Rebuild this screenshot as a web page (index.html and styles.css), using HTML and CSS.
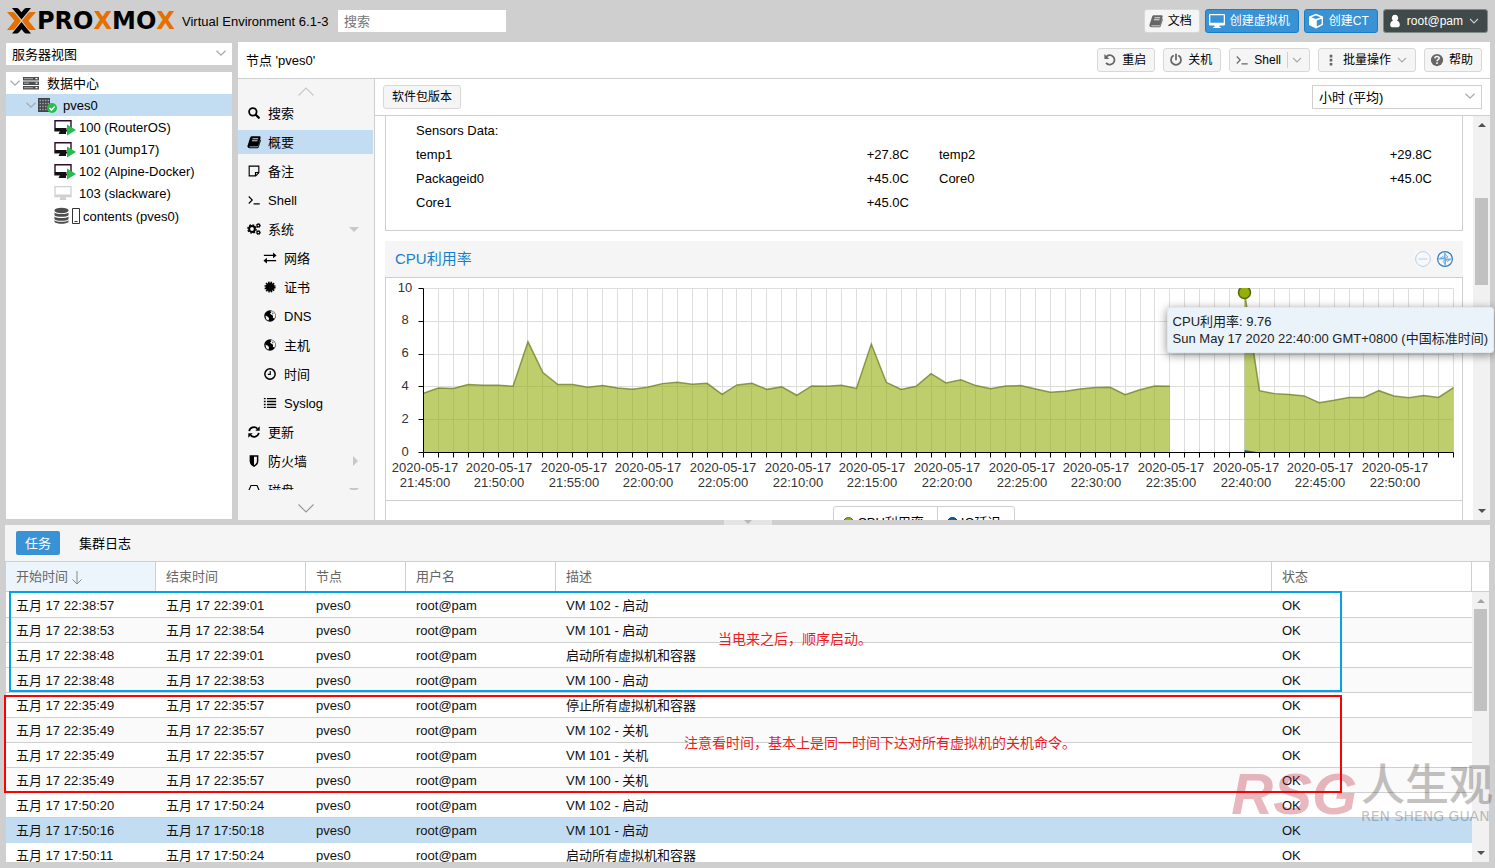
FILE: index.html
```html
<!DOCTYPE html>
<html lang="zh-CN">
<head>
<meta charset="utf-8">
<title>pves0 - Proxmox Virtual Environment</title>
<link rel="stylesheet" href="styles.css">
</head>
<body>
<svg class="sprite" aria-hidden="true">
  <symbol id="i-book" viewBox="0 0 16 16"><path fill="currentColor" d="M5.6 1.5h8.6c1 0 1.6.8 1.3 1.8l-2.4 8.3c-.3.9-1 1.4-1.9 1.4H3.2c-.6 0-.7.9 0 .9h8.5c.6 0 .9-.3 1.1-.8l2.5-8c.6.4.7 1 .5 1.600l-2.300 7.100c-.300.900-1 1.400-1.900 1.400H3C1.300 15.200.100 13.800.600 12.300L3.500 3.200C3.800 2.200 4.600 1.500 5.600 1.500z"/><path stroke="#f5f5f5" stroke-width="1" d="M6.300 4.300h6.500M5.600 6.600h6.500"/></symbol>
  <symbol id="i-desktop" viewBox="0 0 16 16"><path fill="currentColor" fill-rule="evenodd" d="M1 1h14a1 1 0 0 1 1 1v9.500a1 1 0 0 1-1 1h-4.500v1.500h1.300v1H4.200v-1h1.300v-1.500H1a1 1 0 0 1-1-1V2a1 1 0 0 1 1-1zm.300 1.300v7.500h13.400V2.300z"/></symbol>
  <symbol id="i-cube" viewBox="0 0 16 16"><path fill="currentColor" fill-rule="evenodd" d="M8 .800l7 2.700v8.500l-7 3.500-7-3.500V3.500zM8 2.400L3.300 4.300 8 6.100l4.700-1.800zM8.800 7.500v5.900l4.800-2.400V5.700z"/></symbol>
  <symbol id="i-user" viewBox="0 0 16 16"><path fill="currentColor" d="M8 1a3.600 3.700 0 0 1 2.300 6.600C12.500 8 13.500 10 13.500 12.700c0 1.500-.8 2.300-2 2.300h-7c-1.200 0-2-.8-2-2.300C2.500 10 3.500 8 5.700 7.600A3.600 3.700 0 0 1 8 1z"/></symbol>
  <symbol id="i-undo" viewBox="0 0 16 16"><path fill="none" stroke="currentColor" stroke-width="2" d="M3.600 4.500a5.400 5.400 0 1 1-.1 6.800"/><path fill="currentColor" d="M1.600 1.200v5.600h5.600z"/></symbol>
  <symbol id="i-power" viewBox="0 0 16 16"><path fill="none" stroke="currentColor" stroke-width="2" stroke-linecap="round" d="M4.700 3.200a5.700 5.700 0 1 0 6.600 0M8 1.500v6"/></symbol>
  <symbol id="i-term" viewBox="0 0 16 16"><path fill="none" stroke="currentColor" stroke-width="1.300" d="M2 4l4 4-4 4M7.500 12.500h7"/></symbol>
  <symbol id="i-dots" viewBox="0 0 16 16"><path fill="currentColor" d="M6.500 2h3v3h-3zM6.500 6.700h3v3h-3zM6.500 11.400h3v3h-3z"/></symbol>
  <symbol id="i-help" viewBox="0 0 16 16"><circle cx="8" cy="8" r="7" fill="currentColor"/><path fill="none" stroke="#f5f5f5" stroke-width="1.800" d="M5.500 6.200C5.600 4.700 6.600 4 8 4s2.500.8 2.500 2c0 1.500-2.500 1.700-2.500 3.300M8 10.500v2"/></symbol>
  <symbol id="i-down" viewBox="0 0 16 16"><path fill="none" stroke="currentColor" stroke-width="1.300" d="M3.500 5.700L8 10.200l4.500-4.500"/></symbol>
  <symbol id="i-search" viewBox="0 0 16 16"><circle cx="6.700" cy="6.700" r="4.300" fill="none" stroke="currentColor" stroke-width="2"/><path stroke="currentColor" stroke-width="2.600" stroke-linecap="round" d="M10.300 10.300l3.200 3.200"/></symbol>
  <symbol id="i-note" viewBox="0 0 16 16"><path fill="none" stroke="currentColor" stroke-width="1.300" d="M2.500 2.500h11v7.500l-3.500 3.500H2.500zM13.500 9.700H9.700v3.800"/></symbol>
  <symbol id="i-cogs" viewBox="0 0 16 16"><circle cx="5.700" cy="8" r="3.300" fill="none" stroke="currentColor" stroke-width="2.300"/><circle cx="5.700" cy="8" r="4.800" fill="none" stroke="currentColor" stroke-width="1.500" stroke-dasharray="2 1.770"/><circle cx="13" cy="4" r="1.600" fill="none" stroke="currentColor" stroke-width="1.400"/><circle cx="13" cy="12" r="1.600" fill="none" stroke="currentColor" stroke-width="1.400"/><circle cx="13" cy="4" r="2.500" fill="none" stroke="currentColor" stroke-width=".9" stroke-dasharray="1 .96"/><circle cx="13" cy="12" r="2.500" fill="none" stroke="currentColor" stroke-width=".9" stroke-dasharray="1 .96"/></symbol>
  <symbol id="i-exchange" viewBox="0 0 16 16"><path fill="currentColor" d="M1 4.200h10.500V1.800L15.500 5l-4 3.200V5.800H1zM15 10.200H4.500V7.800L.5 11l4 3.200v-2.400H15z"/></symbol>
  <symbol id="i-cert" viewBox="0 0 16 16"><circle cx="8" cy="8" r="5" fill="currentColor"/><circle cx="8" cy="8" r="5.400" fill="none" stroke="currentColor" stroke-width="2" stroke-dasharray="1.700 1.127"/></symbol>
  <symbol id="i-globe" viewBox="0 0 16 16"><circle cx="8" cy="8" r="6.600" fill="currentColor"/><path fill="#f5f5f5" d="M8.500 2.500l2.500 0 2.500 2.500.7 3-1.200 3.200-1.700-1.200.2-2.300-2.200-1.300-1.500-1.200 1.700-1zM2.800 7.500l3.200 1.500 1 2-1 2.500-2.500-2z"/><path fill="currentColor" d="M10.500 4l1.500 1-1 1.200z"/></symbol>
  <symbol id="i-clock" viewBox="0 0 16 16"><circle cx="8" cy="8" r="5.900" fill="none" stroke="currentColor" stroke-width="1.700"/><path fill="none" stroke="currentColor" stroke-width="1.300" d="M8.300 4.500v4H5.500"/></symbol>
  <symbol id="i-list" viewBox="0 0 16 16"><path stroke="currentColor" stroke-width="1.700" d="M1 3h2M1 6.300h2M1 9.700h2M1 13h2M4.500 3H15M4.500 6.300H15M4.500 9.700H15M4.500 13H15"/></symbol>
  <symbol id="i-refresh" viewBox="0 0 16 16"><path fill="none" stroke="currentColor" stroke-width="2" d="M2.500 7A5.500 5.500 0 0 1 12 4.400M13.500 9A5.500 5.500 0 0 1 4 11.600"/><path fill="currentColor" d="M14.500 1.500v5h-5zM1.500 14.500v-5h5z"/></symbol>
  <symbol id="i-shield" viewBox="0 0 16 16"><path fill="currentColor" fill-rule="evenodd" d="M3 1.500h10v6.800c0 3.400-3 5.500-5 6.500-2-1-5-3.100-5-6.500zM8 3.200v9.600c1.700-1 3.300-2.500 3.300-4.500V3.200z"/></symbol>
  <symbol id="i-hdd" viewBox="0 0 16 16"><path fill="none" stroke="currentColor" stroke-width="1.300" d="M4.500 2.800h7l2.500 6v5H2v-5zM2 9h12"/></symbol>
  <symbol id="i-server" viewBox="0 0 16 16"><path fill="#4d4d4d" d="M0 2h16v3.500H0zM0 6.500h16V10H0zM0 11h16v3.500H0z"/><path stroke="#aaa" d="M1 3.700h9M1 8.200h5M1 12.700h9"/><path stroke="#fff" stroke-width="1.300" d="M12.500 3.700h2M12.500 8.200h2M12.500 12.700h2"/></symbol>
  <symbol id="i-node" viewBox="0 0 20 16"><path fill="#444" d="M0 1h12v14H0z"/><path stroke="#9aa9b5" stroke-width="1.500" stroke-dasharray="1.500 1.200" d="M1.500 3.500h10M1.500 6.500h10M1.500 9.500h10M1.500 12.500h10"/><circle cx="14" cy="11" r="5" fill="#21bf4b"/><path fill="none" stroke="#fff" stroke-width="1.600" d="M11.500 11l2 2 3.200-3.500"/></symbol>
  <symbol id="i-vm" viewBox="0 0 22 18"><path fill="none" stroke="#2b0f24" stroke-width="1.400" d="M1 2.700h16v10H1z"/><path fill="#111" d="M1 10h11.500v3H1zM6 13h6v3H4.500z"/><path fill="#21bf4b" d="M13 6.500l9 5.500-9 5.500z"/></symbol>
  <symbol id="i-vmoff" viewBox="0 0 22 18"><path fill="none" stroke="#d0d0d0" stroke-width="1.300" d="M1 2.700h16v10H1z"/><path fill="#d0d0d0" d="M1 10.500h16v2.500H1zM6.500 13h5l1 3H5.500z"/></symbol>
  <symbol id="i-db" viewBox="0 0 26 18"><g fill="#4d4d4d"><ellipse cx="7.500" cy="3.500" rx="7" ry="2.700"/><path d="M.5 5.500c2 2 12 2 14 0v2.700c-2 2.200-12 2.200-14 0zM.5 9.500c2 2 12 2 14 0v2.700c-2 2.200-12 2.200-14 0zM.5 13.300c2 2 12 2 14 0v1.700c-2 2.400-12 2.400-14 0z"/></g><path fill="#fff" stroke="#333" d="M18.500 1.500h7v15h-7zM20.500 14.500h3"/></symbol>
</svg>

<header class="top">
  <a class="logo" href="#" aria-label="Proxmox">
    <svg width="29" height="26" viewBox="0 0 29 26" aria-hidden="true">
      <path fill="#e57000" d="M0 4h5.500c1 0 1.700.4 2.300 1L14 12.800 7.800 21c-.6.700-1.300 1-2.300 1H0l7.500-9.200zM29 4h-5.500c-1 0-1.700.4-2.300 1L15 12.800l6.200 8.200c.6.700 1.300 1 2.300 1H29l-7.500-9.200z"/>
      <path fill="#000" d="M5 0h4.500c1 0 1.800.400 2.500 1.200l2.500 3 2.500-3C17.700.400 18.500 0 19.500 0H24l-9.500 11.500zM5 25.500h4.500c1 0 1.800-.4 2.500-1.200l2.500-3 2.500 3c.7.800 1.500 1.200 2.500 1.200H24l-9.500-11.500z"/>
    </svg>
    <span class="wordmark">PRO<b>X</b>MO<b>X</b></span>
  </a>
  <span class="version">Virtual Environment 6.1-3</span>
  <input class="find" type="text" placeholder="搜索" aria-label="搜索">
  <div class="actions">
    <button class="btn"><svg class="ic"><use href="#i-book"/></svg>文档</button>
    <button class="btn blue"><svg class="ic"><use href="#i-desktop"/></svg>创建虚拟机</button>
    <button class="btn blue"><svg class="ic"><use href="#i-cube"/></svg>创建CT</button>
    <button class="btn dark"><svg class="ic"><use href="#i-user"/></svg>root@pam<svg class="ic caret"><use href="#i-down"/></svg></button>
  </div>
</header>

<main class="work">
  <aside class="left">
    <div class="combo view">
      <select aria-label="视图"><option>服务器视图</option></select>
      <svg class="ic"><use href="#i-down"/></svg>
    </div>
    <ul class="tree">
      <li class="l0"><svg class="ic tw"><use href="#i-down"/></svg><svg class="ic"><use href="#i-server"/></svg><span>数据中心</span></li>
      <li class="l1 on"><svg class="ic tw"><use href="#i-down"/></svg><svg class="nodeic"><use href="#i-node"/></svg><span>pves0</span></li>
      <li class="l2"><svg class="vmic"><use href="#i-vm"/></svg><span>100 (RouterOS)</span></li>
      <li class="l2"><svg class="vmic"><use href="#i-vm"/></svg><span>101 (Jump17)</span></li>
      <li class="l2"><svg class="vmic"><use href="#i-vm"/></svg><span>102 (Alpine-Docker)</span></li>
      <li class="l2"><svg class="vmic"><use href="#i-vmoff"/></svg><span>103 (slackware)</span></li>
      <li class="l2 store"><svg class="dbic"><use href="#i-db"/></svg><span>contents (pves0)</span></li>
    </ul>
  </aside>

  <section class="content">
    <div class="titlebar">
      <h1>节点 'pves0'</h1>
      <div class="tools">
        <button class="btn"><svg class="ic"><use href="#i-undo"/></svg>重启</button>
        <button class="btn"><svg class="ic"><use href="#i-power"/></svg>关机</button>
        <div class="split"><button class="btn"><svg class="ic"><use href="#i-term"/></svg>Shell</button><button class="btn more" aria-label="更多"><svg class="ic caret"><use href="#i-down"/></svg></button></div>
        <button class="btn drop"><svg class="ic"><use href="#i-dots"/></svg>批量操作<svg class="ic caret"><use href="#i-down"/></svg></button>
        <button class="btn"><svg class="ic"><use href="#i-help"/></svg>帮助</button>
      </div>
    </div>
    <div class="split-body">
      <nav class="menu">
        <button class="scroller" aria-label="向上"><svg width="16" height="9" viewBox="0 0 16 9"><path fill="none" stroke="#c8c8c8" stroke-width="1.200" d="M.5 8.500L8 1l7.500 7.500"/></svg></button>
        <ul>
          <li><svg class="ic"><use href="#i-search"/></svg>搜索</li>
          <li class="on"><svg class="ic"><use href="#i-book"/></svg>概要</li>
          <li><svg class="ic"><use href="#i-note"/></svg>备注</li>
          <li><svg class="ic"><use href="#i-term"/></svg>Shell</li>
          <li><svg class="ic"><use href="#i-cogs"/></svg>系统<i class="tri down"></i></li>
          <li class="sub"><svg class="ic"><use href="#i-exchange"/></svg>网络</li>
          <li class="sub"><svg class="ic"><use href="#i-cert"/></svg>证书</li>
          <li class="sub"><svg class="ic"><use href="#i-globe"/></svg>DNS</li>
          <li class="sub"><svg class="ic"><use href="#i-globe"/></svg>主机</li>
          <li class="sub"><svg class="ic"><use href="#i-clock"/></svg>时间</li>
          <li class="sub"><svg class="ic"><use href="#i-list"/></svg>Syslog</li>
          <li><svg class="ic"><use href="#i-refresh"/></svg>更新</li>
          <li><svg class="ic"><use href="#i-shield"/></svg>防火墙<i class="tri right"></i></li>
          <li><svg class="ic"><use href="#i-hdd"/></svg>磁盘<i class="tri down"></i></li>
        </ul>
        <button class="scroller end" aria-label="向下"><svg width="16" height="9" viewBox="0 0 16 9"><path fill="none" stroke="#999" stroke-width="1.200" d="M.5.500L8 8l7.500-7.500"/></svg></button>
      </nav>
      <div class="pane">
        <div class="pane-bar">
          <button class="btn plain">软件包版本</button>
          <div class="combo range">
            <select aria-label="时间范围"><option>小时 (平均)</option></select>
            <svg class="ic"><use href="#i-down"/></svg>
          </div>
        </div>
        <div class="pane-scroll">
          <div class="cards">
            <div class="sensors">
              <p class="wide">Sensors Data:</p>
              <p>temp1<span>+27.8C</span></p><p>temp2<span>+29.8C</span></p>
              <p>Packageid0<span>+45.0C</span></p><p>Core0<span>+45.0C</span></p>
              <p>Core1<span>+45.0C</span></p>
            </div>
            <div class="chart-card">
              <div class="card-head">
                <h2>CPU利用率</h2>
                <button aria-label="缩小" class="faint"><svg width="16" height="16" viewBox="0 0 16 16"><circle cx="8" cy="8" r="7.400" fill="none" stroke="#3892d4"/><path stroke="#3892d4" d="M3.500 8h9"/></svg></button>
                <button aria-label="重置缩放"><svg width="16" height="16" viewBox="0 0 16 16"><circle cx="8" cy="8" r="7.400" fill="none" stroke="#2f7fc1" stroke-width="1.200"/><path fill="#dcebf7" stroke="#5fa5dc" stroke-width=".8" d="M7.500 2.500l3.500 3.500-3.500 1.500zM13.500 8.500l-3.500 2-1.500-2zM8.500 13.500L6 10.500l2.500-2zM2.500 7.500L6 5.500l1.500 2z"/><path stroke="#5fa5dc" stroke-width=".8" d="M8 1v14M1 8h14"/></svg></button>
              </div>
              <svg id="cpu-chart" class="plot" role="img" aria-label="CPU利用率"></svg>
              <div class="legend">
                <div class="legend-box"><span><i class="dot green"></i>CPU利用率</span><span><i class="dot navy"></i>IO延迟</span></div>
              </div>
            </div>
          </div>
          <div class="bar main-bar"><i class="up"></i><i class="thumb"></i><i class="dn"></i></div>
        </div>
      </div>
    </div>
    <div class="tip" role="tooltip">CPU利用率: 9.76<br>Sun May 17 2020 22:40:00 GMT+0800 (中国标准时间)</div>
  </section>
</main>

<div class="divider"><i></i></div>

<section class="log">
  <div class="tabs"><button class="tab on">任务</button><button class="tab">集群日志</button></div>
  <div class="grid">
    <div class="rows">
      <table>
        <colgroup><col class="c150"><col class="c150"><col class="c100"><col class="c150"><col><col class="c200"></colgroup>
        <thead><tr><th class="sorted">开始时间<svg width="10" height="14" viewBox="0 0 10 14"><path fill="none" stroke="#888" d="M5 0v13M.5 8.500L5 13l4.500-4.500"/></svg></th><th>结束时间</th><th>节点</th><th>用户名</th><th>描述</th><th>状态</th></tr></thead>
        <tbody>
          <tr><td>五月 17 22:38:57</td><td>五月 17 22:39:01</td><td>pves0</td><td>root@pam</td><td>VM 102 - 启动</td><td>OK</td></tr>
          <tr><td>五月 17 22:38:53</td><td>五月 17 22:38:54</td><td>pves0</td><td>root@pam</td><td>VM 101 - 启动</td><td>OK</td></tr>
          <tr><td>五月 17 22:38:48</td><td>五月 17 22:39:01</td><td>pves0</td><td>root@pam</td><td>启动所有虚拟机和容器</td><td>OK</td></tr>
          <tr><td>五月 17 22:38:48</td><td>五月 17 22:38:53</td><td>pves0</td><td>root@pam</td><td>VM 100 - 启动</td><td>OK</td></tr>
          <tr><td>五月 17 22:35:49</td><td>五月 17 22:35:57</td><td>pves0</td><td>root@pam</td><td>停止所有虚拟机和容器</td><td>OK</td></tr>
          <tr><td>五月 17 22:35:49</td><td>五月 17 22:35:57</td><td>pves0</td><td>root@pam</td><td>VM 102 - 关机</td><td>OK</td></tr>
          <tr><td>五月 17 22:35:49</td><td>五月 17 22:35:57</td><td>pves0</td><td>root@pam</td><td>VM 101 - 关机</td><td>OK</td></tr>
          <tr><td>五月 17 22:35:49</td><td>五月 17 22:35:57</td><td>pves0</td><td>root@pam</td><td>VM 100 - 关机</td><td>OK</td></tr>
          <tr><td>五月 17 17:50:20</td><td>五月 17 17:50:24</td><td>pves0</td><td>root@pam</td><td>VM 102 - 启动</td><td>OK</td></tr>
          <tr class="on"><td>五月 17 17:50:16</td><td>五月 17 17:50:18</td><td>pves0</td><td>root@pam</td><td>VM 101 - 启动</td><td>OK</td></tr>
          <tr><td>五月 17 17:50:11</td><td>五月 17 17:50:24</td><td>pves0</td><td>root@pam</td><td>启动所有虚拟机和容器</td><td>OK</td></tr>
        </tbody>
      </table>
    </div>
    <div class="side"><div class="corner"></div><div class="bar log-bar"><i class="up"></i><i class="thumb"></i><i class="dn"></i></div></div>
  </div>
  <div class="frame blue-frame"></div>
  <div class="frame red-frame"></div>
  <p class="note note-a">当电来之后，顺序启动。</p>
  <p class="note note-b">注意看时间，基本上是同一时间下达对所有虚拟机的关机命令。</p>
  <div class="mark"><span class="rsg">RSG</span><div class="mark-side"><span class="cn">人生观</span><span class="en">REN SHENG GUAN</span></div></div>
</section>
<script src="app.js"></script>
</body>
</html>
```
FILE: styles.css
```css
* { box-sizing: border-box; }
body {
  margin: 0; height: 100vh; display: flex; flex-direction: column; overflow: hidden;
  background: #cfcfcf; color: #000; padding-bottom: 6px;
  font: 13px/17px "Liberation Sans", "Noto Sans CJK SC", sans-serif;
}
button, input, select { font: inherit; color: inherit; }
button { border: 0; padding: 0; background: none; }
ul, p, h1, h2 { margin: 0; padding: 0; list-style: none; font-weight: normal; }
.sprite { position: absolute; width: 0; height: 0; }
.ic { width: 16px; height: 16px; flex: none; }

.top { height: 42px; flex: none; display: flex; align-items: center; padding: 0 7px; }
.logo { display: flex; align-items: center; gap: 1px; color: #000; text-decoration: none; width: 175px; }
.wordmark { font: bold 24px/26px "DejaVu Sans", sans-serif; }
.wordmark b { color: #e57000; }
.version { width: 156px; white-space: nowrap; }
.find { width: 168px; height: 22px; border: 0; padding: 0 6px; background: #fff; }
.find::placeholder { color: #757575; opacity: 1; }
.actions { margin-left: auto; display: flex; gap: 5px; }

.btn {
  height: 24px; display: flex; align-items: center; gap: 4px; padding: 0 8px 0 4px;
  background: #f5f5f5; border: 1px solid #d8d8d8; border-radius: 3px;
  font-size: 12px; line-height: 16px; white-space: nowrap;
}
.btn .ic { color: #666; width: 14px; height: 14px; margin: 0 1px; }
.btn .caret { color: #aaa; margin: 0; }
.btn.drop { padding-right: 6px; }
.actions .btn { padding: 0 7px 0 3px; }
.actions .btn.blue { gap: 5px; padding: 0 8px 0 3px; background: #3892d4; border-color: #157fcc; color: #fff; }
.btn.blue .ic { color: #fff; width: 16px; height: 16px; margin: 0; }
.actions .btn.dark { padding-right: 6px; background: #404a4a; border-color: #7c8a8a; color: #fff; }
.btn.dark .ic { color: #fff; }
.btn.dark .caret { color: #ccc; }

.work { flex: 1; min-height: 0; display: flex; padding-left: 6px; padding-right: 5px; }
.left { width: 226px; flex: none; margin: 1px 6px 1px 0; display: flex; flex-direction: column; gap: 7px; }
.combo { position: relative; background: #fff; }
.combo select { width: 100%; height: 100%; appearance: none; border: 0; background: none; padding: 0 6px; }
.combo .ic { position: absolute; right: 3px; top: 2px; color: #aaa; pointer-events: none; }
.view { height: 22px; }
.tree { flex: 1; background: #fff; }
.tree li { height: 22px; display: flex; align-items: center; }
.tree li.on { background: #c2ddf2; }
.tree .tw { color: #aaa; }
.l0 { padding-left: 1px; }
.l0 span { margin-left: 8px; }
.l1 { padding-left: 17px; }
.l1 .tw { margin-right: -1px; }
.nodeic { width: 20px; height: 16px; margin-right: 5px; }
.l2 { padding-left: 48px; }
.vmic { width: 22px; height: 18px; margin-right: 3px; }
.dbic { width: 26px; height: 18px; margin-right: 3px; }
.tree li.store { height: 24px; }

.content { flex: 1; min-width: 0; background: #fff; display: flex; flex-direction: column; position: relative; }
.titlebar { height: 37px; flex: none; border-bottom: 1px solid #cfcfcf; display: flex; align-items: center; padding: 0 8px; }
.titlebar h1 { font-size: 13px; }
.tools { margin-left: auto; display: flex; gap: 8px; }
.split { display: flex; background: #f5f5f5; border: 1px solid #d8d8d8; border-radius: 3px; align-items: center; }
.split .btn { border: 0; height: 22px; background: none; padding-right: 6px; }
.split .btn.more { height: 16px; border-left: 1px solid #d0d0d0; border-radius: 0; padding: 0 5px 0 2px; }
.split-body { flex: 1; min-height: 0; display: flex; }

.menu { width: 137px; flex: none; background: #f5f5f5; border-right: 1px solid #cfcfcf; display: flex; flex-direction: column; }
.scroller { height: 22px; flex: none; display: flex; justify-content: center; align-items: center; padding-top: 2px; }
.scroller.end { height: 30px; padding-top: 6px; }
.menu ul { flex: 1; min-height: 0; overflow: hidden; display: flex; flex-direction: column; gap: 5px; }
.menu li { height: 24px; flex: none; display: flex; align-items: center; gap: 7px; padding: 0 14px 0 9px; margin-right: 1px; }
.menu li .ic { width: 14px; height: 14px; }
.menu li.sub { padding-left: 25px; }
.menu li.on { background: #c2ddf2; }
.tri { margin-left: auto; border: 5px solid transparent; }
.tri.down { border-top-color: #c8c8c8; border-bottom-width: 0; }
.tri.right { border-left-color: #c8c8c8; border-right-width: 0; margin-right: 1px; }

.pane { flex: 1; min-width: 0; display: flex; flex-direction: column; }
.pane-bar { height: 37px; flex: none; border-bottom: 1px solid #cfcfcf; display: flex; align-items: center; justify-content: space-between; padding: 0 8px; }
.btn.plain { padding: 0 8px; }
.range { width: 170px; height: 24px; border: 1px solid #cfcfcf; }
.pane-scroll { flex: 1; min-height: 0; display: flex; }
.cards { flex: 1; min-width: 0; overflow: hidden; padding: 0 10px; }
.sensors { border: 1px solid #cfcfcf; border-top: 0; padding: 3px 30px 15px; margin-bottom: 10px; display: grid; grid-template-columns: 1fr 1fr; column-gap: 30px; line-height: 24px; }
.sensors p { display: flex; justify-content: space-between; }
.sensors .wide { grid-column: 1 / -1; }
.card-head { height: 37px; background: #f5f5f5; border-bottom: 1px solid #cfcfcf; display: flex; align-items: center; gap: 6px; padding: 0 10px; }
.card-head h2 { margin-right: auto; font-size: 15px; line-height: 20px; color: #157fcc; }
.card-head button { height: 16px; display: flex; }
.card-head .faint { opacity: .35; background: #fff; }
.plot { display: block; width: calc(100% - 2px); height: 222px; margin: 0 1px; }
.plot text { fill: #333; }
.chart-card { background: linear-gradient(#cfcfcf, #cfcfcf) left / 1px 100% no-repeat, linear-gradient(#cfcfcf, #cfcfcf) right / 1px 100% no-repeat; }
.legend { border-top: 1px solid #cfcfcf; padding: 5px 0 8px; display: flex; justify-content: center; }
.legend-box { height: 32px; border: 1px solid #cfcfcf; border-radius: 3px; display: flex; }
.legend-box span { display: flex; align-items: center; gap: 3px; padding: 0 13px 0 9px; }
.legend-box span + span { border-left: 1px solid #cfcfcf; }
.dot { width: 11px; height: 11px; border-radius: 50%; }
.green { background: #94ae0a; border: 1px solid #566606; }
.navy { background: #115fa6; border: 1px solid #0a3861; }

.bar { width: 17px; background: #f1f1f1; display: flex; flex-direction: column; align-items: center; flex: none; }
.bar .up { border: 4px solid transparent; border-top: 0; border-bottom-color: #505050; margin: 7px 0 6px; }
.bar .dn { border: 4px solid transparent; border-bottom: 0; border-top-color: #505050; margin: auto 0 7px; }
.bar .thumb { width: 13px; background: #c1c1c1; }
.main-bar .thumb { height: 87px; margin-top: 65px; }
.log-bar { flex: 1; }
.log-bar .up { border-bottom-color: #a3a3a3; }
.log-bar .thumb { height: 102px; }

.tip {
  position: absolute; right: -4px; top: 265px; padding: 5px; white-space: nowrap;
  background: #eaf3fa; border: 1px solid #e1e8ee; border-radius: 3px; color: #222;
  box-shadow: 0 2px 10px rgba(0, 0, 0, .45);
}

.divider { height: 5px; flex: none; display: flex; justify-content: center; }
.divider i { width: 48px; background: #e4e4e4; display: flex; justify-content: center; }
.divider i::after { content: ""; border: 4px solid transparent; border-top-color: #b8b8b8; border-bottom: 0; }

.log { height: 337px; flex: none; margin: 0 5px; position: relative; display: flex; flex-direction: column; }
.tabs { height: 37px; flex: none; background: #f5f5f5; border-bottom: 1px solid #cfcfcf; display: flex; align-items: center; gap: 10px; padding: 0 11px; }
.tab { height: 24px; padding: 0 9px; border-radius: 2px; }
.tab.on { background: #3892d4; color: #fff; }
.grid { flex: 1; min-height: 0; margin: 0 1px; display: flex; background: #fff; }
.rows { flex: 1; min-width: 0; overflow: hidden; }
table { width: 100%; table-layout: fixed; border-collapse: separate; border-spacing: 0; }
.c100 { width: 100px; } .c150 { width: 150px; } .c200 { width: 200px; }
th { height: 30px; padding: 0 10px; text-align: left; font-weight: normal; color: #666; border-right: 1px solid #cfcfcf; border-bottom: 1px solid #cfcfcf; line-height: 17px; }
th.sorted { background: #edf5fc; }
th svg { vertical-align: middle; margin-left: 4px; }
td { height: 25px; padding: 0 10px; border-bottom: 1px solid #cfcfcf; color: #111; line-height: 17px; white-space: nowrap; }
tbody tr:first-child td { height: 26px; padding-top: 1px; }
tbody tr:nth-child(even) td { background: #fafafa; }
tbody tr.on td { background: #c2ddf2; border-color: #c2ddf2; }
.side { display: flex; flex-direction: column; flex: none; }
.corner { height: 30px; border-bottom: 1px solid #cfcfcf; }

.frame { position: absolute; right: 148px; }
.blue-frame { left: 4px; top: 66px; height: 101px; border: 2px solid #00a2e8; }
.red-frame { left: -1px; top: 170px; height: 98px; border: 2px solid #f00; }
.note { position: absolute; font-size: 14px; line-height: 20px; color: #ed1c24; white-space: nowrap; }
.note-a { left: 713px; top: 104px; }
.note-b { left: 679px; top: 208px; }
.mark { position: absolute; right: -3px; top: 238px; display: flex; align-items: center; gap: 4px; opacity: .3; pointer-events: none; white-space: nowrap; }
.rsg { font: italic bold 58px/62px "Liberation Sans Narrow", "Liberation Sans", sans-serif; color: #b5162b; }
.mark-side { display: flex; flex-direction: column; color: #3c3835; }
.cn { font-size: 44px; line-height: 44px; font-weight: 500; }
.en { font: 14px/16px "DejaVu Sans", sans-serif; }
```
FILE: app.js
```javascript
const cpu = [
  3.61, 3.93, 3.91, 4.14, 4.1, 4.1, 4.04, 6.75, 4.87, 4.14, 4.14, 3.98, 4.08, 3.93, 3.85, 3.98, 4.2, 4.28,
  4.16, 4.22, 3.55, 4.12, 4.22, 3.85, 4, 3.49, 4.06, 4.04, 4.1, 3.91, 6.61, 4.28, 3.85, 4.04, 4.81, 4.24,
  4.44, 4.08, 3.89, 4.06, 4.08, 3.87, 3.67, 3.73, 3.87, 3.96, 3.98, 3.53, 3.83, 4.06, 4.04,
  null, null, null, null,
  9.76, 3.77, 3.59, 3.53, 3.45, 3.04, 3.18, 3.36, 3.36, 3.77, 3.45, 3.34, 3.47, 3.36, 3.96
];

const chart = document.getElementById('cpu-chart');

function draw() {
  const left = 37.5, right = chart.clientWidth - 8.5, top = 10.5, bottom = 174.5;
  const x = i => left + (right - left) * i / (cpu.length - 1);
  const y = v => bottom - (bottom - top) * v / 10;
  const snap = n => Math.floor(n) + 0.5;
  let out = '';

  // grid
  let grid = '', ticks = '';
  cpu.forEach((_, i) => {
    grid += `M${snap(x(i))} ${top}V${bottom}`;
    ticks += `M${snap(x(i))} ${bottom}v5`;
  });
  for (let v = 0; v <= 10; v += 2) {
    grid += `M${left} ${snap(y(v))}H${right}`;
    ticks += `M${left} ${snap(y(v))}h-5`;
    out += `<text x="19" y="${Math.round(y(v)) + 3}" text-anchor="middle">${v}</text>`;
  }
  out += `<path d="${grid}" stroke="#ddd" fill="none"/>`;

  // one area per unbroken run of samples
  let run = [];
  const flush = () => {
    if (!run.length) return;
    const line = run.map(([i, v]) => `${x(i)} ${y(v)}`).join('L');
    out += `<path d="M${x(run[0][0])} ${bottom}L${line}V${bottom}z" fill="#94ae0a" fill-opacity=".6"/>`;
    out += `<path d="M${line}" fill="none" stroke="#6a7d20" stroke-opacity=".75" stroke-width="1.5"/>`;
    run = [];
  };
  cpu.forEach((v, i) => v === null ? flush() : run.push([i, v]));
  flush();
  out += `<path d="M${x(55)} ${bottom - 2.5}L${x(56)} ${bottom}H${x(55)}z" fill="#115fa6"/>`;

  // axes and time labels
  out += `<path d="M${left} ${top}V${bottom}H${right}${ticks}" stroke="#000" fill="none"/>`;
  for (let i = 0; i <= 65; i += 5) {
    const m = 45 + i;
    const t = `${21 + Math.floor(m / 60)}:${String(m % 60).padStart(2, '0')}:00`;
    const cx = Math.round(x(i)) + 1;
    out += `<text x="${cx}" y="194" text-anchor="middle">2020-05-17</text>`;
    out += `<text x="${cx}" y="209" text-anchor="middle">${t}</text>`;
  }

  // highlighted sample, cut at the top of the plot
  out += `<clipPath id="plot-area"><rect x="0" y="10" width="100%" height="170"/></clipPath>`;
  out += `<circle clip-path="url(#plot-area)" cx="${x(55)}" cy="${y(9.76)}" r="6" fill="#94ae0a" stroke="#566606" stroke-width="1.5"/>`;
  chart.innerHTML = out;
}

draw();
window.addEventListener('resize', draw);
```
